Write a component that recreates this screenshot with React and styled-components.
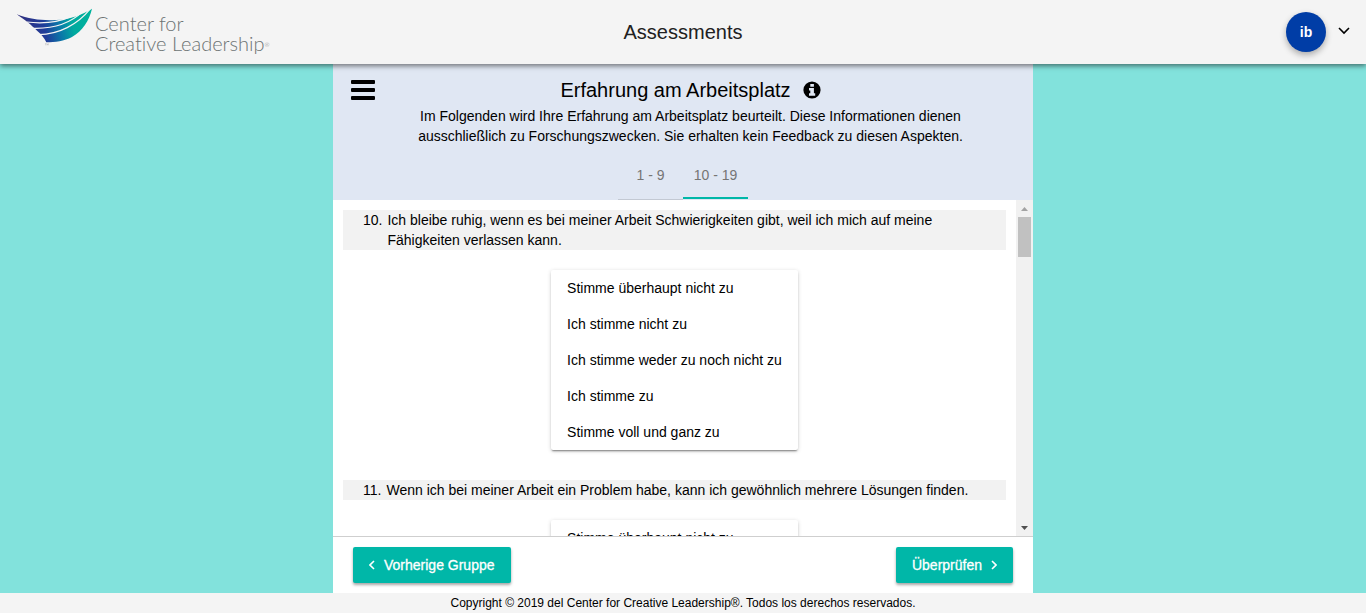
import React from "react";
import styled, { createGlobalStyle } from "styled-components";

const GlobalStyle = createGlobalStyle`
  *, *::before, *::after { box-sizing: border-box; }
  body {
    margin: 0;
    background: #82e2dc;
    color: #000;
    font: 14px/20px "Liberation Sans", Arial, sans-serif;
  }
  button { font: inherit; color: inherit; border: 0; background: none; padding: 0; cursor: pointer; }
  h1, h2, p, ol { margin: 0; padding: 0; font-weight: 400; }
`;

const Page = styled.div`
  display: flex;
  flex-direction: column;
  height: 100vh;
`;

const TopBar = styled.header`
  display: grid;
  grid-template-columns: 1fr auto 1fr;
  align-items: center;
  flex: none;
  height: 64px;
  padding: 0 16px;
  background: #f4f4f4;
  box-shadow: 0 2px 5px rgba(0, 0, 0, 0.5);
  z-index: 1;
`;

const Brand = styled.a`
  display: flex;
  gap: 2px;
  align-items: flex-start;
  color: #6c7373;
  text-decoration: none;
`;

const BrandName = styled.span`
  display: flex;
  flex-direction: column;
  padding: 4px 0 2px;
  font: 300 20px/20px Lato, "Open Sans", sans-serif;
  font-variant-ligatures: none;
  white-space: nowrap;

  small { font-size: 6px; vertical-align: 4px; line-height: 1; }
`;

const AppTitle = styled.h1`
  font-size: 20px;
  line-height: 24px;
  color: #212121;
`;

const UserMenu = styled.button`
  display: flex;
  align-items: center;
  justify-self: end;
  gap: 12px;
`;

const Avatar = styled.span`
  display: grid;
  place-items: center;
  width: 40px;
  height: 40px;
  border-radius: 50%;
  background: #003da6;
  color: #fff;
  font-weight: 700;
  box-shadow: 0 3px 6px rgba(0, 0, 0, 0.3);
`;

const Panel = styled.main`
  display: flex;
  flex-direction: column;
  flex: 1;
  min-height: 0;
  width: 100%;
  max-width: 700px;
  margin: 0 auto;
  background: #fff;
`;

const SectionHead = styled.section`
  flex: none;
  background: #e0e7f3;
`;

const HeadRow = styled.div`
  display: flex;
  align-items: flex-start;
  padding: 12px 27px 6px 18px;
`;

const IconButton = styled.button`
  display: grid;
  place-items: center;
  width: ${(p) => p.$size}px;
  height: 28px;
`;

const Intro = styled.div`
  flex: 1;
  display: flex;
  flex-direction: column;
  align-items: center;
  gap: 2px;
  text-align: center;

  p { max-width: 580px; }
`;

const TitleRow = styled.div`
  display: flex;
  align-items: center;
  gap: 12px;

  h2 { font-size: 20px; line-height: 28px; }
`;

const Tabs = styled.div`
  display: flex;
  justify-content: center;
  padding-bottom: 1px;
`;

const Tab = styled.button`
  width: 65px;
  height: 47px;
  color: #757575;
  border-bottom: 2px solid ${(p) => (p.$active ? "#00b7a8" : "transparent")};
  box-shadow: ${(p) => (p.$active ? "none" : "0 1px #c3c9d3")};
`;

const ScrollArea = styled.div`
  display: flex;
  flex: 1;
  min-height: 0;
`;

const Questions = styled.ol`
  flex: 1;
  overflow-y: auto;
  scrollbar-width: none;
  padding: 10px;
  list-style: none;
`;

const Question = styled.li`
  display: flex;
  flex-direction: column;
  align-items: center;
  gap: 20px;
  padding-bottom: 30px;
`;

const Prompt = styled.div`
  display: flex;
  gap: 5px;
  width: 100%;
  padding: 0 20px;
  background: #f2f2f2;
`;

const Options = styled.div`
  display: flex;
  flex-direction: column;
  border-radius: 2px;
  box-shadow: 0 2px 2px -1px rgba(0, 0, 0, 0.45), 0 1px 4px rgba(0, 0, 0, 0.18);
`;

const Option = styled.button`
  height: 36px;
  padding: 0 16px;
  text-align: left;
`;

const ScrollTrack = styled.div`
  display: flex;
  flex-direction: column;
  align-items: center;
  width: 17px;
  background: #f1f1f1;
`;

const ScrollArrow = styled.span`
  display: grid;
  place-items: center;
  width: 17px;
  height: 17px;
  color: ${(p) => (p.$off ? "#a3a3a3" : "#505050")};
`;

const ScrollThumb = styled.span`
  width: 13px;
  height: 40px;
  margin-bottom: auto;
  background: #c1c1c1;
`;

const Actions = styled.div`
  display: flex;
  flex: none;
  justify-content: space-between;
  padding: 10px 20px;
  border-top: 1px solid #cfcfcf;
`;

const ActionButton = styled.button`
  display: flex;
  align-items: center;
  gap: 8px;
  height: 36px;
  padding: 0 16px;
  border-radius: 2px;
  background: #00b7a8;
  color: #fff;
  -webkit-text-stroke: 0.3px #fff;
  box-shadow: 0 2px 3px rgba(0, 0, 0, 0.35);
`;

const Footer = styled.footer`
  flex: none;
  background: #f4f4f4;
  font-size: 12px;
  text-align: center;
`;

const answers = [
  "Stimme überhaupt nicht zu",
  "Ich stimme nicht zu",
  "Ich stimme weder zu noch nicht zu",
  "Ich stimme zu",
  "Stimme voll und ganz zu",
];

const questions = [
  {
    number: 10,
    text: "Ich bleibe ruhig, wenn es bei meiner Arbeit Schwierigkeiten gibt, weil ich mich auf meine Fähigkeiten verlassen kann.",
  },
  {
    number: 11,
    text: "Wenn ich bei meiner Arbeit ein Problem habe, kann ich gewöhnlich mehrere Lösungen finden.",
  },
];

function Wing() {
  return (
    <svg width="77" height="40" viewBox="48 28 231 120" aria-hidden="true" overflow="visible">
      <defs>
        <linearGradient id="wing" x1="0" x2="1" y1="0.1" y2="0">
          <stop offset="0" stopColor="#33307f" />
          <stop offset="0.32" stopColor="#1f3c99" />
          <stop offset="0.52" stopColor="#0a78a8" />
          <stop offset="0.7" stopColor="#00aa9f" />
          <stop offset="1" stopColor="#00b49c" />
        </linearGradient>
      </defs>
      <path
        d="M50 44 C90 60 130 63 168 61 C212 59 246 45 276 27 C268 62 248 93 216 112 C192 124 166 128 139 128 C132 114 124 104 112 94 C94 76 76 62 50 44Z"
        fill="url(#wing)"
      />
      <g fill="none" stroke="#f4f4f4" strokeWidth="3.6">
        <path d="M80 67 C130 73 175 68 214 50" />
        <path d="M98 86 C160 88 212 70 248 36" />
        <path d="M116 105 C176 104 232 76 272 26" />
      </g>
      <path d="M135 132 h4 M137 132 v5 M141 137 v-5 l2 3 l2 -3 v5" fill="none" stroke="#999" />
    </svg>
  );
}

function MenuIcon() {
  return (
    <svg width="24" height="20" viewBox="0 0 24 20" fill="currentColor" aria-hidden="true">
      <rect width="24" height="4" rx="1" />
      <rect y="8" width="24" height="4" rx="1" />
      <rect y="16" width="24" height="4" rx="1" />
    </svg>
  );
}

function InfoIcon() {
  return (
    <svg width="18" height="18" viewBox="0 0 18 18" aria-hidden="true">
      <circle cx="9" cy="9" r="8.6" fill="currentColor" />
      <path d="M7.3 3 H10.9 V5.8 H7.3Z M6 7 H10.9 V12.2 H12.2 V14.8 H6 V12.2 H7.3 V9.4 H6Z" fill="#e0e7f3" />
    </svg>
  );
}

function Chevron({ width, height, d, stroke = 2 }) {
  return (
    <svg width={width} height={height} viewBox={`0 0 ${width} ${height}`} aria-hidden="true">
      <path d={d} fill="none" stroke="currentColor" strokeWidth={stroke} />
    </svg>
  );
}

export default function App() {
  return (
    <Page>
      <GlobalStyle />
      <TopBar>
        <Brand href="#">
          <Wing />
          <BrandName>
            <span>Center for</span>
            <span>
              Creative Leadership<small>®</small>
            </span>
          </BrandName>
        </Brand>
        <AppTitle>Assessments</AppTitle>
        <UserMenu type="button">
          <Avatar>ib</Avatar>
          <Chevron width={12} height={12} d="M1 2 L6 7 L11 2" stroke={1.6} />
        </UserMenu>
      </TopBar>
      <Panel>
        <SectionHead>
          <HeadRow>
            <IconButton type="button" $size={24} aria-label="Menü">
              <MenuIcon />
            </IconButton>
            <Intro>
              <TitleRow>
                <h2>Erfahrung am Arbeitsplatz</h2>
                <IconButton type="button" $size={18} aria-label="Information">
                  <InfoIcon />
                </IconButton>
              </TitleRow>
              <p>
                Im Folgenden wird Ihre Erfahrung am Arbeitsplatz beurteilt. Diese Informationen dienen
                ausschließlich zu Forschungszwecken. Sie erhalten kein Feedback zu diesen Aspekten.
              </p>
            </Intro>
          </HeadRow>
          <Tabs role="tablist">
            <Tab type="button" role="tab" aria-selected="false">1 - 9</Tab>
            <Tab type="button" role="tab" aria-selected="true" $active>10 - 19</Tab>
          </Tabs>
        </SectionHead>
        <ScrollArea>
          <Questions>
            {questions.map((q) => (
              <Question key={q.number}>
                <Prompt>
                  <span>{q.number}.</span>
                  <span>{q.text}</span>
                </Prompt>
                <Options>
                  {answers.map((a) => (
                    <Option type="button" key={a}>{a}</Option>
                  ))}
                </Options>
              </Question>
            ))}
          </Questions>
          <ScrollTrack aria-hidden="true">
            <ScrollArrow $off>
              <svg width="7" height="4" viewBox="0 0 7 4"><path d="M0 4 L3.5 0 L7 4Z" fill="currentColor" /></svg>
            </ScrollArrow>
            <ScrollThumb />
            <ScrollArrow>
              <svg width="7" height="4" viewBox="0 0 7 4"><path d="M0 0 L3.5 4 L7 0Z" fill="currentColor" /></svg>
            </ScrollArrow>
          </ScrollTrack>
        </ScrollArea>
        <Actions>
          <ActionButton type="button">
            <Chevron width={7} height={10} d="M5 1 L1 5 L5 9" stroke={1.6} />
            Vorherige Gruppe
          </ActionButton>
          <ActionButton type="button">
            Überprüfen
            <Chevron width={7} height={10} d="M2 1 L6 5 L2 9" stroke={1.6} />
          </ActionButton>
        </Actions>
      </Panel>
      <Footer>Copyright © 2019 del Center for Creative Leadership®. Todos los derechos reservados.</Footer>
    </Page>
  );
}
